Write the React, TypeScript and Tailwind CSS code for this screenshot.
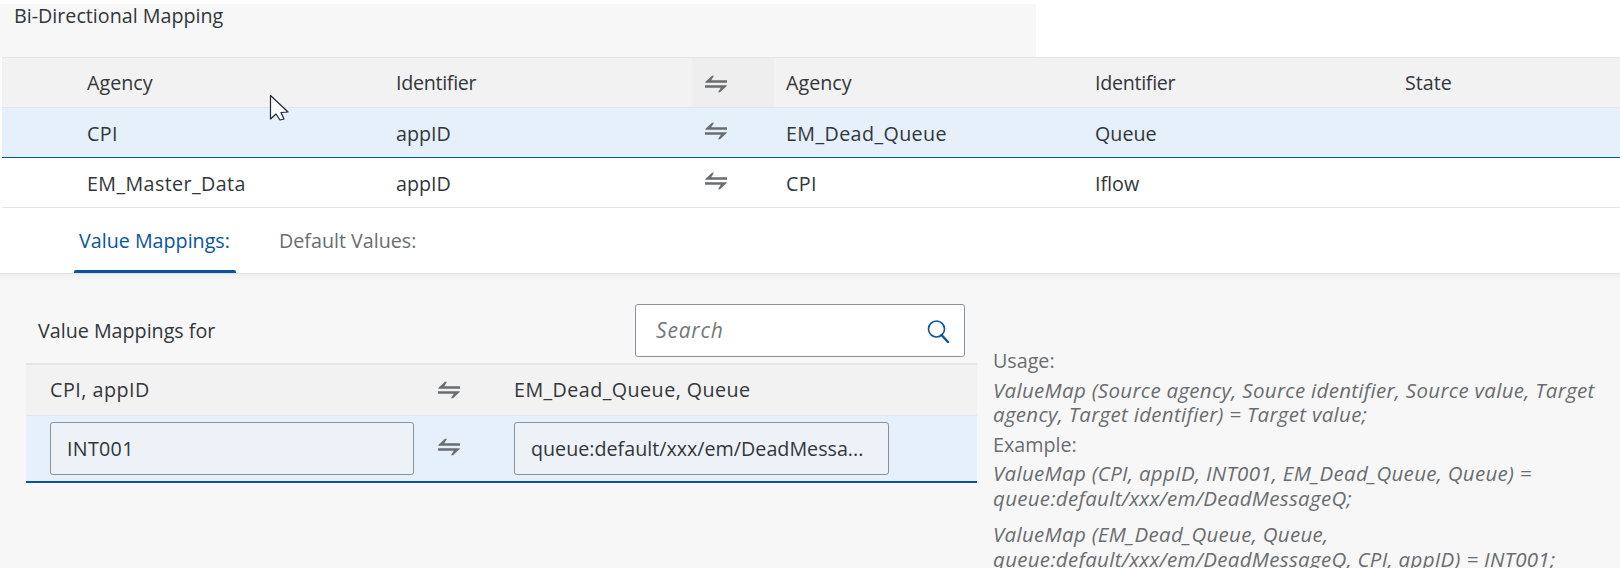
const FONT = "font-['Open_Sans','Noto_Sans',sans-serif]";

const MapIcon = ({ className = '' }: { className?: string }) => (
  <svg width="22" height="18" viewBox="0 0 22 18" className={className} fill="#6a6d70">
    <path d="M0 7.2 L7 0.8 L9 0.8 L6.2 5.2 L22 5.2 L22 7.8 L0.6 7.8 Z" />
    <path d="M22 10.8 L15 17.2 L13 17.2 L15.8 12.8 L0 12.8 L0 10.2 L21.4 10.2 Z" />
  </svg>
);

const Cursor = () => (
  <svg width="20" height="27" viewBox="0 0 20 27" className="absolute left-[269px] top-[94px]">
    <path
      d="M1.5 1.5 L1.5 25 L7 20 L11 26 L15 25 L12 18.5 L19 18 Z"
      fill="#fff"
      stroke="#1f2530"
      strokeWidth="1.2"
      strokeLinejoin="round"
    />
  </svg>
);

const mappingRows = [
  { a: 'CPI', b: 'appID', c: 'EM_Dead_Queue', d: 'Queue', selected: true },
  { a: 'EM_Master_Data', b: 'appID', c: 'CPI', d: 'Iflow', selected: false },
];

export default function App() {
  return (
    <div className={`${FONT} relative h-[568px] w-[1620px] overflow-hidden bg-white text-[19.7px] text-[#32363a]`}>
      <Cursor />

      {/* Заголовок */}
      <div className="mt-1 h-[53px] w-[1036px] bg-[#f7f7f7] pl-[14px] leading-[24px]">Bi-Directional Mapping</div>

      <div className="ml-[2px]">
        {/* Шапка таблицы */}
        <div className="flex h-[51px] items-center border-y border-[#e5e5e5] bg-[#f2f2f2] pt-[1px]">
          <div className="w-[85px]" />
          <div className="w-[309px]">Agency</div>
          <div className="w-[296px] tracking-[-0.3px]">Identifier</div>
          <div className="-mt-[1px] flex h-[49px] w-[82px] items-center bg-[#eeeeee] pl-[13px]">
            <MapIcon className="translate-y-[1px]" />
          </div>
          <div className="w-[12px]" />
          <div className="w-[309px]">Agency</div>
          <div className="w-[310px] tracking-[-0.3px]">Identifier</div>
          <div>State</div>
        </div>

        {mappingRows.map((row) => (
          <div
            key={row.a}
            className={`flex h-[50px] items-center border-b pt-[2px] ${
              row.selected ? 'border-[#0854a0] bg-[#e5f0fa]' : 'border-[#e5e5e5] bg-white'
            }`}
          >
            <div className="w-[85px]" />
            <div className="w-[309px] tracking-[0.4px]">{row.a}</div>
            <div className="w-[296px]">{row.b}</div>
            <div className="w-[82px] pl-[13px]">
              <MapIcon className="-translate-y-[3px]" />
            </div>
            <div className="w-[12px]" />
            <div className="w-[309px] tracking-[0.4px]">{row.c}</div>
            <div>{row.d}</div>
          </div>
        ))}

        {/* Вкладки */}
        <div className="flex h-[65px] bg-white pl-[72px]">
          <div className="relative w-[162px] pt-[18px] pl-[5px] whitespace-nowrap text-[#0854a0]">
            Value Mappings:
            <div className="absolute bottom-0 left-0 h-[3px] w-full rounded-t-[2px] bg-[#0854a0]" />
          </div>
          <div className="pt-[18px] pl-[43px] text-[#6a6d70]">Default Values:</div>
        </div>
      </div>

      {/* Нижняя часть */}
      <div className="flex h-[295px] bg-[#f7f7f7] bg-gradient-to-b from-[#efefef] to-[#f7f7f7] to-[8px] shadow-[inset_0_1px_0_#e0e0e0]">
        <div className="ml-[26px] w-[951px] pt-[31px]">
          <div className="flex h-[53px] items-center">
            <div className="ml-[12px] w-[597px]">Value Mappings for</div>
            <div className="flex h-[53px] w-[330px] items-center justify-between rounded-[3px] border border-[#89919a] bg-white pr-[14px] pl-[20px] text-[21px] tracking-[0.8px] text-[#74777a] italic">
              Search
              <svg width="24" height="24" viewBox="0 0 24 24" fill="none" stroke="#0854a0">
                <circle cx="10.5" cy="10" r="8" strokeWidth="1.6" />
                <path d="M15.5 16 L22 23" strokeWidth="2.4" strokeLinecap="round" />
              </svg>
            </div>
          </div>

          <div className="mt-[6px] flex h-[52px] items-center border-t-2 border-[#e5e5e5] bg-[#f2f2f2]">
            <div className="w-[388px] pl-[24px] tracking-[0.5px]">CPI, appID</div>
            <div className="w-[100px]">
              <MapIcon className="ml-[24px]" />
            </div>
            <div className="tracking-[0.45px]">EM_Dead_Queue, Queue</div>
          </div>

          <div className="flex h-[68px] items-center border-t border-b-2 border-t-[#dfe8f2] border-b-[#0854a0] bg-[#e5f0fa]">
            <div className="ml-[24px] flex h-[53px] w-[364px] items-center rounded-[3px] border border-[#89919a] bg-[#edf2f9] pl-[16px] tracking-[0.3px]">
              INT001
            </div>
            <div className="w-[100px]">
              <MapIcon className="ml-[24px] -translate-y-[2px]" />
            </div>
            <div className="flex h-[53px] w-[375px] items-center rounded-[3px] border border-[#89919a] bg-[#edf2f9] pl-[16px]">
              queue:default/xxx/em/DeadMessa...
            </div>
          </div>
        </div>

        {/* Справка */}
        <div className="ml-[16px] w-[612px] pt-[76px] leading-[24.5px] text-[#6a6d70]">
          <div>Usage:</div>
          <p className="mt-[4px] text-[20.5px] tracking-[0.3px] italic">
            ValueMap (Source agency, Source identifier, Source value, Target agency, Target identifier) = Target value;
          </p>
          <div className="mt-[6px]">Example:</div>
          <p className="mt-[4px] text-[20.5px] tracking-[0.3px] italic">
            ValueMap (CPI, appID, INT001, EM_Dead_Queue, Queue) = queue:default/xxx/em/DeadMessageQ;
          </p>
          <p className="mt-[12px] text-[20.5px] tracking-[0.3px] italic">
            ValueMap (EM_Dead_Queue, Queue,
            <br />
            queue:default/xxx/em/DeadMessageQ, CPI, appID) = INT001;
          </p>
        </div>
      </div>
    </div>
  );
}
